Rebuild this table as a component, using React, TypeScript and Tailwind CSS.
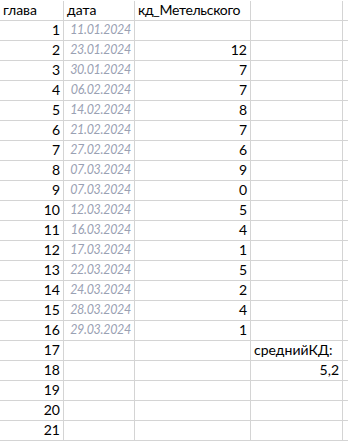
const rows: [number, string, string][] = [
  [1, "11.01.2024", ""],
  [2, "23.01.2024", "12"],
  [3, "30.01.2024", "7"],
  [4, "06.02.2024", "7"],
  [5, "14.02.2024", "8"],
  [6, "21.02.2024", "7"],
  [7, "27.02.2024", "6"],
  [8, "07.03.2024", "9"],
  [9, "07.03.2024", "0"],
  [10, "12.03.2024", "5"],
  [11, "16.03.2024", "4"],
  [12, "17.03.2024", "1"],
  [13, "22.03.2024", "5"],
  [14, "24.03.2024", "2"],
  [15, "28.03.2024", "4"],
  [16, "29.03.2024", "1"],
  [17, "", ""],
  [18, "", ""],
  [19, "", ""],
  [20, "", ""],
  [21, "", ""],
];

const cell =
  "h-[20px] min-w-0 overflow-hidden border-r border-b border-[#d4d4d4] px-[3px] flex items-end pb-[1px] whitespace-nowrap";

export default function App() {
  return (
    <div
      className="w-[348px] h-[443px] overflow-hidden bg-white pt-px text-[14px] leading-[18px] text-black"
      style={{ fontFamily: "Lato, 'Open Sans', sans-serif" }}
    >
      <div className="grid grid-cols-[64px_71px_116px_92px_1fr]">
        {/* header */}
        <div className={cell}>глава</div>
        <div className={cell}>дата</div>
        <div className={`${cell} tracking-[-0.3px]`}>кд_Метельского</div>
        <div className={cell}></div>
        <div className={cell}></div>

        {rows.map(([n, date, kd]) => (
          <div key={n} className="contents">
            <div className={`${cell} justify-end`}>{n}</div>
            <div className={`${cell} justify-end italic text-[12.5px] tracking-[-0.3px] text-[#9aa1b3]`}>{date}</div>
            <div className={`${cell} justify-end`}>{kd}</div>
            <div className={`${cell} ${n === 18 ? "justify-end" : ""}`}>
              {n === 17 ? "среднийКД:" : n === 18 ? "5,2" : ""}
            </div>
            <div className={cell}></div>
          </div>
        ))}
      </div>
    </div>
  );
}
